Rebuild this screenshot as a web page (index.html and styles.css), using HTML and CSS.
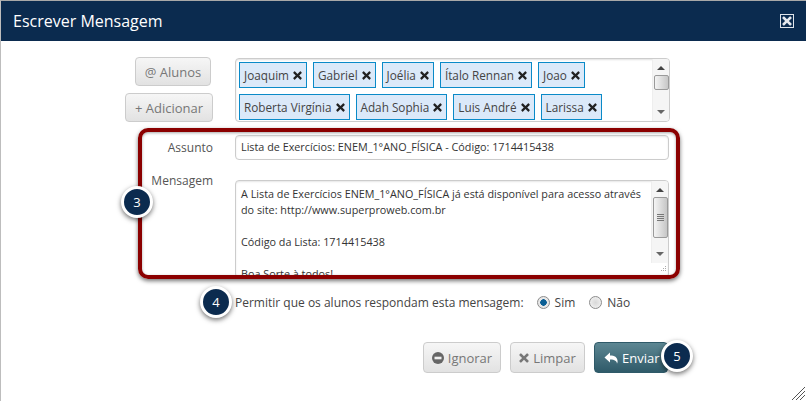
FILE: index.html
```html
<!DOCTYPE html>
<html lang="pt">
<head>
<meta charset="utf-8">
<title>Escrever Mensagem</title>
<link rel="stylesheet" href="styles.css">
</head>
<body>
<svg class="defs" width="0" height="0" aria-hidden="true">
  <symbol id="x" viewBox="0 0 10 10"><path d="M2.3 0.6 5 3.2 7.7 0.6Q8.2 0.2 8.7 0.6L9.5 1.4Q9.9 1.9 9.5 2.4L6.9 5 9.5 7.6Q9.9 8.1 9.5 8.6L8.7 9.4Q8.2 9.8 7.7 9.4L5 6.8 2.3 9.4Q1.8 9.8 1.3 9.4L0.5 8.6Q0.1 8.1 0.5 7.6L3.1 5 0.5 2.4Q0.1 1.9 0.5 1.4L1.3 0.6Q1.8 0.2 2.3 0.6Z" fill="currentColor"/></symbol>
</svg>
<div class="dialog">
  <header class="titlebar">
    <h1 class="title">Escrever Mensagem</h1>
    <span class="close"><svg class="close-x"><use href="#x"/></svg></span>
  </header>
  <main class="content">
    <div class="row row-to">
      <div class="side">
        <button class="btn btn-alunos">@ Alunos</button>
        <button class="btn btn-add">+ Adicionar</button>
      </div>
      <div class="tagbox">
        <div class="tags">
          <span class="tag">Joaquim <svg class="ix"><use href="#x"/></svg></span>
          <span class="tag">Gabriel <svg class="ix"><use href="#x"/></svg></span>
          <span class="tag">Joélia <svg class="ix"><use href="#x"/></svg></span>
          <span class="tag">Ítalo Rennan <svg class="ix"><use href="#x"/></svg></span>
          <span class="tag">Joao <svg class="ix"><use href="#x"/></svg></span>
          <span class="tag">Roberta Virgínia <svg class="ix"><use href="#x"/></svg></span>
          <span class="tag">Adah Sophia <svg class="ix"><use href="#x"/></svg></span>
          <span class="tag">Luis André <svg class="ix"><use href="#x"/></svg></span>
          <span class="tag">Larissa <svg class="ix"><use href="#x"/></svg></span>
        </div>
        <div class="scroll">
          <span class="arrow up"></span>
          <span class="thumb thumb-small"></span>
          <span class="arrow down"></span>
        </div>
      </div>
    </div>
    <div class="row row-subject">
      <label class="label">Assunto</label>
      <div class="input">Lista de Exercícios: ENEM_1°ANO_FÍSICA - Código: 1714415438</div>
    </div>
    <div class="row row-message">
      <label class="label">Mensagem</label>
      <div class="textarea">
        <div class="text">A Lista de Exercícios ENEM_1°ANO_FÍSICA já está disponível para acesso através do site: http://www.superproweb.com.br<br><br>Código da Lista: 1714415438<br><br>Boa Sorte à todos!</div>
        <div class="scroll scroll-msg">
          <span class="arrow up"></span>
          <span class="thumb thumb-large"><i class="grip"></i></span>
          <span class="arrow down"></span>
        </div>
        <svg class="ta-grip" viewBox="0 0 7 7"><path d="M5 1h1v1H5zM3 3h1v1H3zM5 3h1v1H5zM1 5h1v1H1zM3 5h1v1H3zM5 5h1v1H5z" fill="#aaa"/></svg>
      </div>
    </div>
    <div class="options">
      <span class="question">Permitir que os alunos respondam esta mensagem:</span>
      <span class="radio checked"></span><span class="opt">Sim</span>
      <span class="radio"></span><span class="opt">Não</span>
    </div>
    <div class="actions">
      <button class="btn btn-act btn-ignore"><svg class="i-minus" viewBox="0 0 12 12"><circle cx="6" cy="6" r="6" fill="currentColor"/><rect x="2.5" y="4.7" width="7" height="2.6" fill="#f0f0f0"/></svg>Ignorar</button>
      <button class="btn btn-act btn-clear"><svg class="i-x"><use href="#x"/></svg>Limpar</button>
      <button class="btn btn-act btn-primary"><svg class="i-reply" viewBox="0 0 14 12"><path d="M6 0.5V3.4C10.5 3.4 13.6 5 13.6 9.3 13.6 10.1 13.4 11 13 11.7 13 9 10.5 7.3 6 7.4V10.4L0.5 5.4Z" fill="currentColor"/></svg>Enviar</button>
    </div>
  </main>
  <div class="highlight"></div>
  <span class="badge badge-3">3</span>
  <span class="badge badge-4">4</span>
  <span class="badge badge-5">5</span>
  <svg class="resize" viewBox="0 0 14 14"><path d="M1 14 14 1M5 14 14 5M9 14 14 9" stroke="#555" stroke-width="1" fill="none"/></svg>
</div>
</body>
</html>
```
FILE: styles.css
```css
* { box-sizing: border-box; }
html, body { margin: 0; padding: 0; }
body { width: 806px; height: 401px; overflow: hidden; background: #fff; font-family: "Open Sans", sans-serif; font-size: 12px; color: #333; }
.defs { position: absolute; }
.dialog { position: relative; width: 806px; height: 401px; background: #fff; border-top: 1px solid #a8a8a8; border-left: 1px solid #bdbdbd; overflow: hidden; }
.titlebar { height: 40px; background: #0b2b4f; color: #fff; display: flex; align-items: center; justify-content: space-between; padding: 0 12px; }
.title { margin: 0 0 1px; font-size: 16px; font-weight: 400; line-height: 22px; }
.close { width: 14px; height: 14px; border: 1px solid #dfe4ea; display: flex; align-items: center; justify-content: center; color: #e6e9ee; }
.close-x { width: 10px; height: 10px; }
.content { padding: 16px 0 0 0; }
.row { display: flex; gap: 22px; }
.side { width: 212px; display: flex; flex-direction: column; align-items: flex-end; gap: 7px; }
.btn { font: inherit; font-size: 13px; height: 29px; padding: 0; color: #777; background: linear-gradient(#f6f6f6, #e2e2e2); border: 1px solid #ccc; border-radius: 4px; display: inline-flex; align-items: center; justify-content: center; white-space: nowrap; }
.btn-alunos { width: 76px; margin-right: 2px; }
.btn-add { width: 88px; }
.tagbox { width: 435px; height: 64px; margin-top: 1px; border: 1px solid #ccc; border-radius: 4px; display: flex; overflow: hidden; box-shadow: inset 0 1px 2px rgba(0,0,0,.12); }
.tags { flex: 1; display: flex; flex-wrap: wrap; align-content: flex-start; gap: 6px; padding: 3px 0 0 3px; }
.tag { height: 26px; padding: 0 4px; border: 1px solid #0a8ac8; background: #dbe9f9; color: #444; font-size: 11.75px; display: inline-flex; align-items: center; gap: 4px; white-space: nowrap; }
.ix { width: 9px; height: 9px; color: #222; }
.scroll { width: 17px; flex: none; background: #f5f5f5; display: flex; flex-direction: column; align-items: center; border-left: 1px solid #eee; }
.arrow { width: 0; height: 0; border-left: 4px solid transparent; border-right: 4px solid transparent; flex: none; }
.arrow.up { border-bottom: 4px solid #444; margin-top: 7px; }
.arrow.down { border-top: 4px solid #666; margin-top: auto; margin-bottom: 7px; }
.thumb { width: 15px; flex: none; border: 1px solid #9a9a9a; border-radius: 2px; background: linear-gradient(90deg, #f4f4f4, #c6c6c6); display: flex; align-items: center; justify-content: center; }
.thumb-small { height: 15px; margin-top: 5px; }
.thumb-large { height: 41px; margin-top: 5px; }
.grip { display: block; width: 7px; height: 7px; background: repeating-linear-gradient(#777 0 1px, transparent 1px 2px); }
.row-subject { margin-top: 13px; }
.label { width: 212px; text-align: right; color: #555; font-size: 12px; }
.row-subject .label { line-height: 25px; }
.input { width: 434px; height: 25px; padding: 0 5px; border: 1px solid #ccc; border-radius: 4px; line-height: 22px; font-size: 10.8px; color: #333; box-shadow: inset 0 1px 2px rgba(0,0,0,.1); }
.row-message { margin-top: 20px; height: 98px; }
.row-message .label { line-height: 16px; margin-top: -7px; }
.textarea { position: relative; width: 434px; height: 98px; border: 1px solid #ccc; border-radius: 4px; display: flex; overflow: hidden; box-shadow: inset 0 1px 2px rgba(0,0,0,.1); }
.text { flex: 1; padding: 5px 6px 0 5px; line-height: 16px; font-size: 10.8px; color: #333; }
.scroll-msg { height: 82px; }
.ta-grip { position: absolute; right: 1px; bottom: 5px; width: 7px; height: 7px; }
.options { margin-top: 14px; padding-left: 234px; display: flex; align-items: center; height: 20px; color: #444; font-size: 12px; }
.question { margin-right: 13px; }
.radio { width: 13px; height: 13px; border-radius: 50%; border: 1px solid #8c8c8c; background: radial-gradient(#d8d8d8, #f6f6f6); margin-right: 5px; }
.radio.checked { background: radial-gradient(#0b5f95 0 3px, #e8e8e8 3.5px); }
.opt { margin-right: 14px; }
.actions { margin-top: 30px; display: flex; padding-left: 422px; gap: 9px; }
.btn-act { height: 31px; }
.btn-ignore { width: 78px; }
.btn-clear { width: 75px; }
.btn-primary { width: 74px; color: #fff; background: linear-gradient(#5d8793, #2f5a69); border-color: #2f5a69; justify-content: flex-start; padding-left: 9px; }
.btn-act svg { margin-right: 4px; }
.i-minus { width: 12px; height: 12px; color: #666; }
.i-x { width: 10px; height: 10px; color: #777; }
.i-reply { width: 14px; height: 12px; }
.highlight { position: absolute; left: 137px; top: 127px; width: 542px; height: 151px; border: 4px solid #8b0000; border-radius: 10px; box-shadow: 0 2px 4px rgba(0,0,0,.55), inset 0 1px 3px rgba(0,0,0,.35); background: transparent; pointer-events: none; }
.badge { position: absolute; width: 32px; height: 32px; border-radius: 50%; background: #0b2b4f; color: #fff; border: 3px solid #fff; box-shadow: 0 2px 5px rgba(0,0,0,.55); display: flex; align-items: center; justify-content: center; font-size: 13px; }
.badge-3 { left: 120px; top: 185px; }
.badge-4 { left: 199px; top: 285px; }
.badge-5 { left: 660px; top: 339px; }
.resize { position: absolute; right: 1px; bottom: 1px; width: 14px; height: 14px; }
```
